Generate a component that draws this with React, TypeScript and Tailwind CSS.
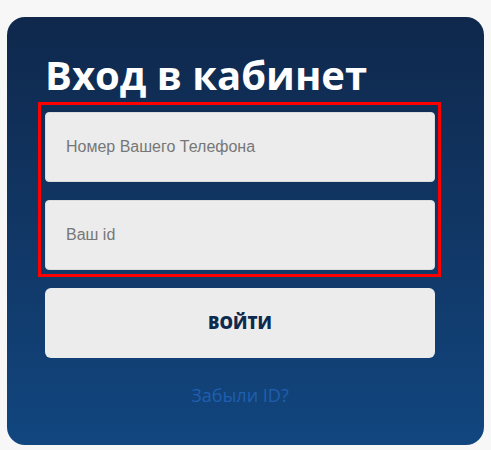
export default function App() {
  return (
    <div className="min-h-[450px] w-full bg-[#f7f7f7] px-[7px] pt-[17px] pb-[6px]">
      <div className="flex flex-col rounded-[18px] bg-linear-to-b from-[#0f284c] to-[#11467f] pl-[38px] pr-[49px] pt-[34px] pb-[36px]">
        <h1 className="font-['Open_Sans',sans-serif] text-[40px] font-bold leading-[48px] text-white">
          Вход в кабинет
        </h1>

        <div className="mt-[3px] -ml-[7px] -mr-[6px] flex flex-col gap-[18px] border-[3px] border-[#ff0000] pt-[7px] pb-[4px] pl-[4px] pr-[3px]">
          <input
            type="text"
            placeholder="Номер Вашего Телефона"
            className="h-[70px] w-full rounded-[4px] border border-[#dcdcdc] bg-[#ececec] px-[20px] font-['Liberation_Sans',Arial,sans-serif] text-[16px] text-[#333] outline-none placeholder:text-[#777]"
          />
          <input
            type="text"
            placeholder="Ваш id"
            className="h-[70px] w-full rounded-[4px] border border-[#dcdcdc] bg-[#ececec] px-[20px] font-['Liberation_Sans',Arial,sans-serif] text-[16px] text-[#333] outline-none placeholder:text-[#777]"
          />
        </div>

        <button className="mt-[11px] h-[70px] w-full rounded-[6px] bg-[#ececec] font-['Open_Sans',sans-serif] text-[17px] font-extrabold text-[#0f2a4f]">
          ВОЙТИ
        </button>

        <a
          href="#"
          className="mt-[24px] text-center font-['Open_Sans',sans-serif] text-[18px] text-[#1f5fb0]"
        >
          Забыли ID?
        </a>
      </div>
    </div>
  );
}
